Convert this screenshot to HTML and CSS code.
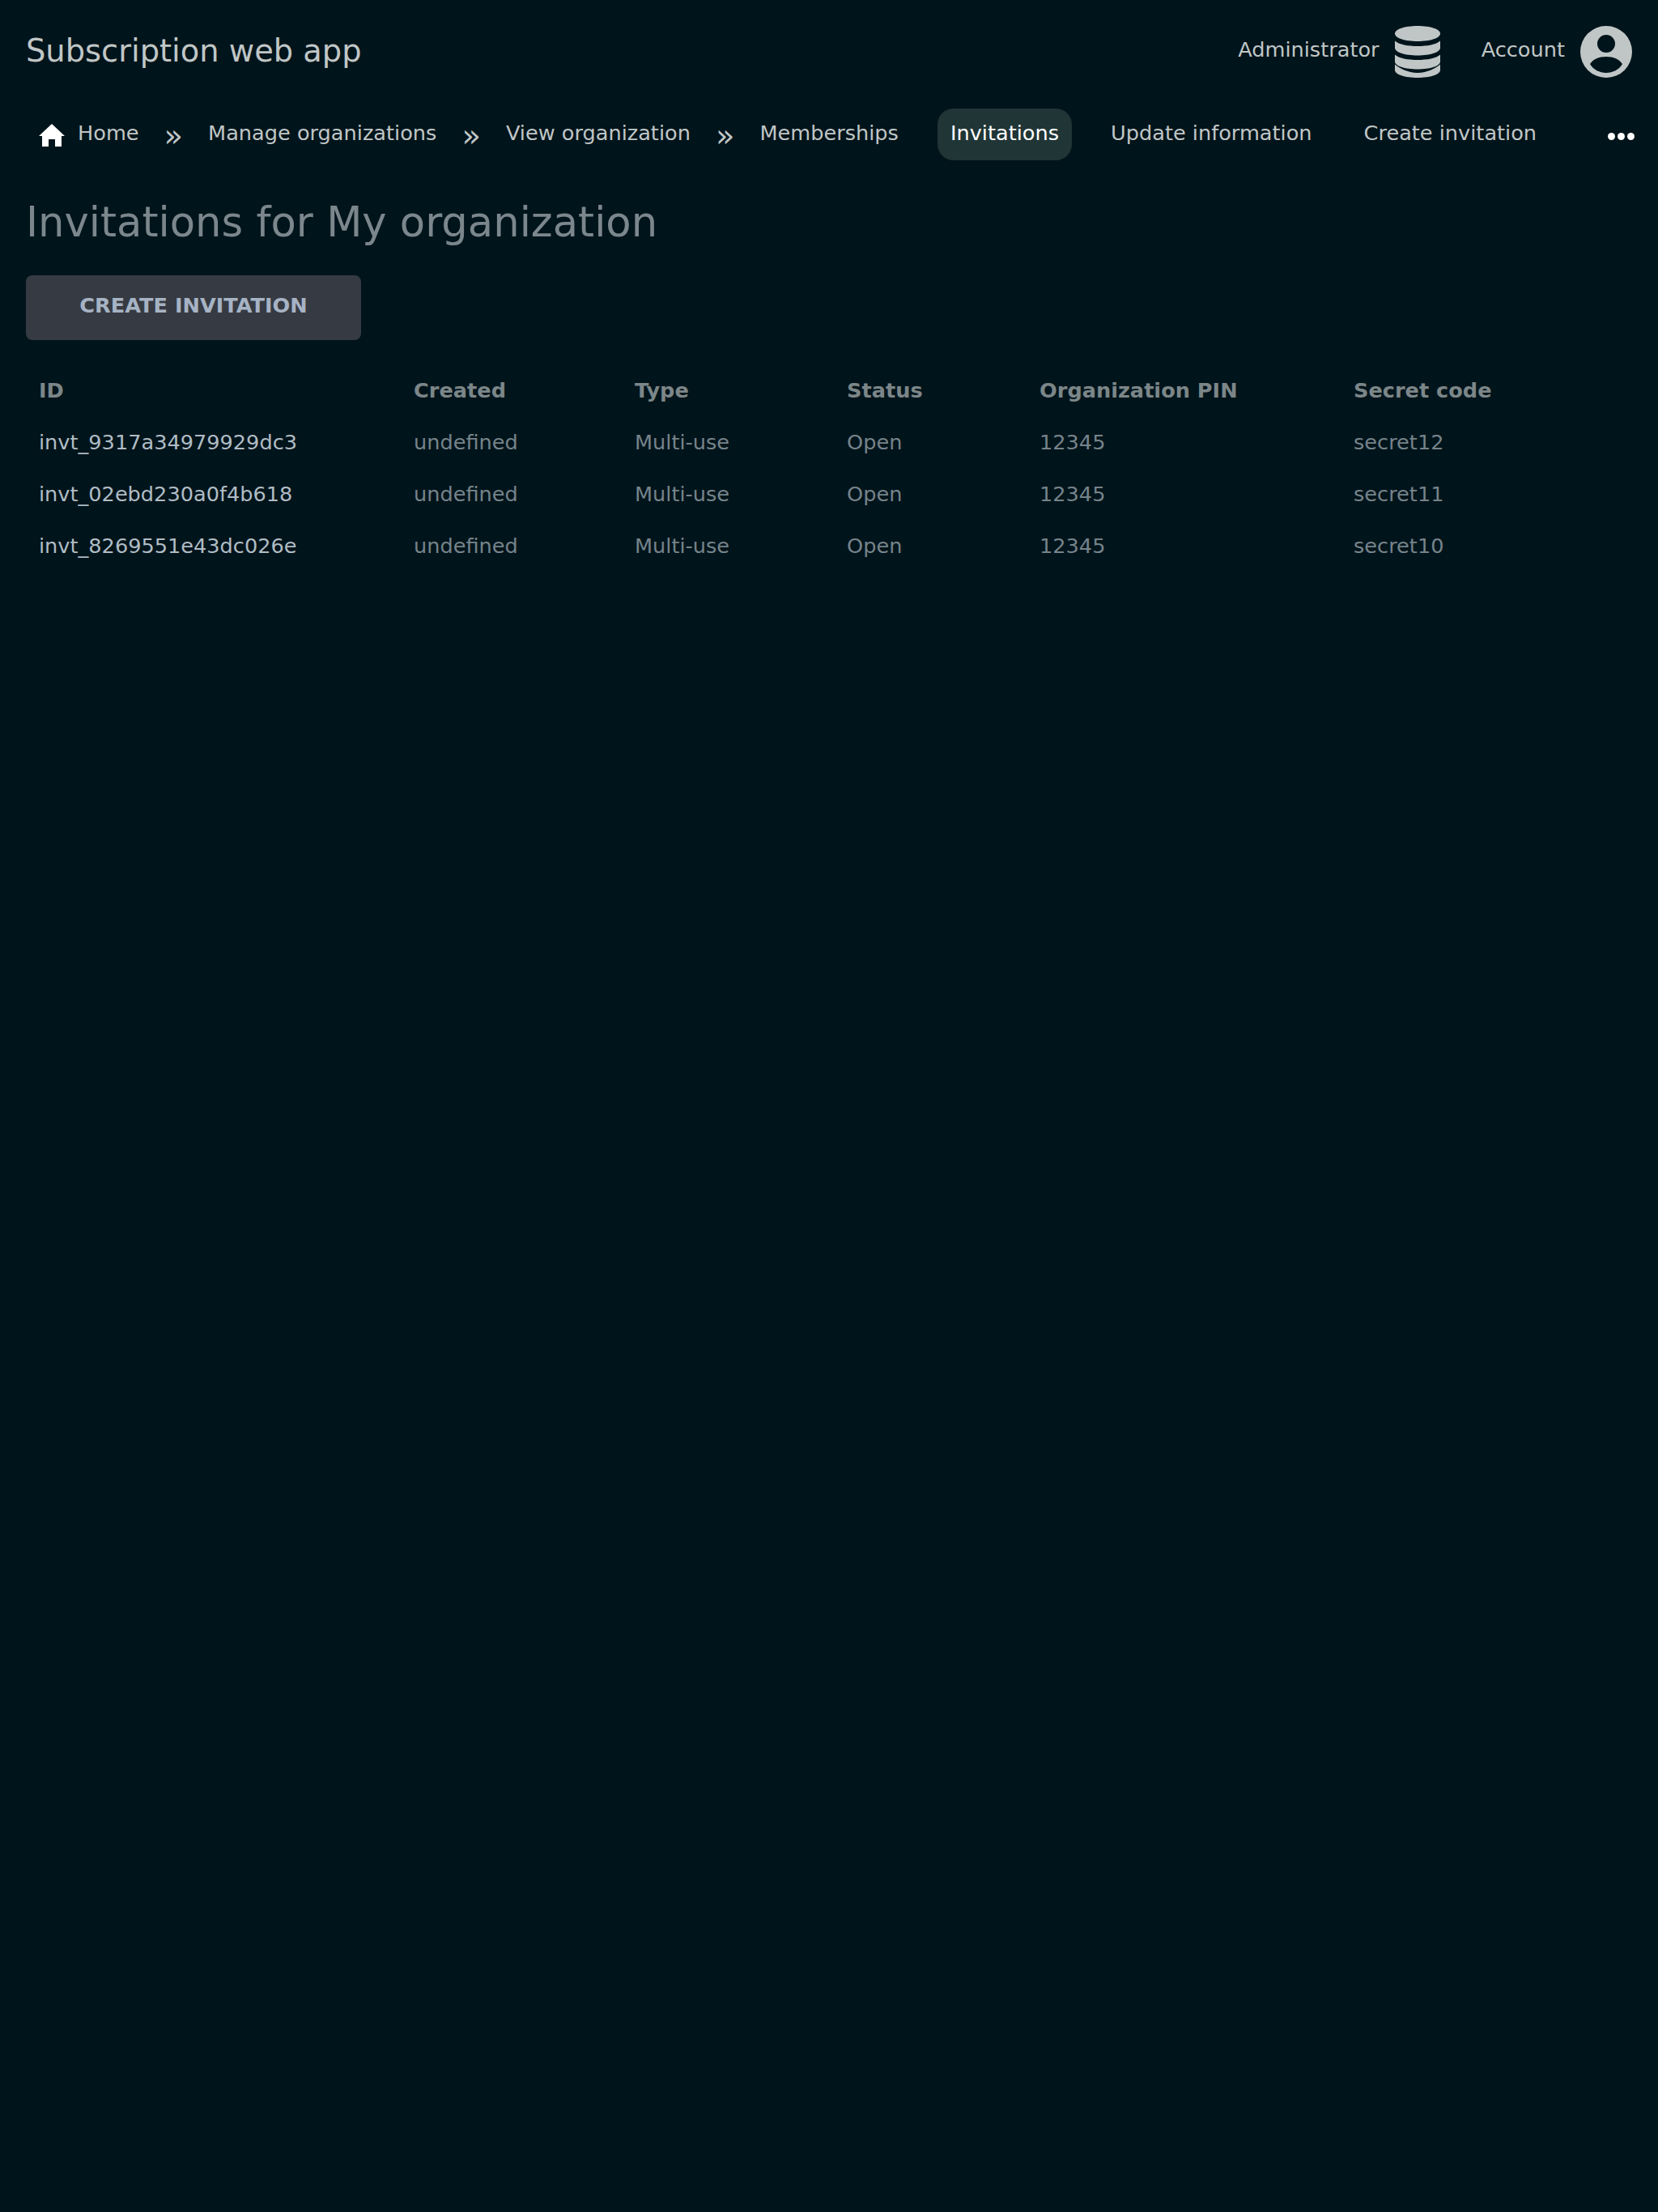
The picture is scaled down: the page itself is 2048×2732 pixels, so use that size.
FILE: index.html
```html
<!DOCTYPE html>
<html lang="en">

<head>
  <meta charset="UTF-8">
  <meta name="viewport" content="width=device-width, initial-scale=1.0">
  <title>Invitations</title>
  <link rel="stylesheet" href="styles.css">
</head>

<body>
  <header class="top-bar">
    <span class="app-title">Subscription web app</span>
    <div class="top-links">
      <a class="top-link">
        <span>Administrator</span>
        <svg class="db-icon" viewBox="0 0 56 64">
          <path d="M28 0C43.5 0 56 4 56 9.500S43.500 19 28 19 0 15 0 9.500 12.500 0 28 0z" />
          <path d="M0 18.500C5 23 16 25 28 25s23-2 28-6.500V27c0 5.500-12.500 9.500-28 9.500S0 32.500 0 27z" />
          <path d="M0 35.500C5 40 16 42 28 42s23-2 28-6.500V44c0 5.500-12.500 9.500-28 9.500S0 49.500 0 44z" />
          <path d="M0 47.500C5 52 16 58 28 58s23-6 28-10.500V54.500C56 60 43.500 64 28 64S0 60 0 54.500z" />
        </svg>
      </a>
      <a class="top-link">
        <span>Account</span>
        <svg class="user-icon" viewBox="0 0 64 64">
          <path fill-rule="evenodd" d="M32 0a32 32 0 1 1 0 64 32 32 0 0 1 0-64zm0 11a11 11 0 1 0 0 22 11 11 0 0 0 0-22zm0 27c-9 0-16 3-20 9 4 7 12 11 20 11s16-4 20-11c-4-6-11-9-20-9z" />
        </svg>
      </a>
    </div>
  </header>

  <nav class="menu">
    <a class="menu-item">
      <svg class="home-icon" viewBox="0 0 32 28">
        <path d="M16 0 32 15h-4v13h-8v-9h-8v9H4V15H0z" />
      </svg>
      Home
    </a>
    <span class="crumb-sep">»</span>
    <a class="menu-item">Manage organizations</a>
    <span class="crumb-sep">»</span>
    <a class="menu-item">View organization</a>
    <span class="crumb-sep">»</span>
    <a class="menu-item">Memberships</a>
    <a class="menu-item active">Invitations</a>
    <a class="menu-item">Update information</a>
    <a class="menu-item">Create invitation</a>
    <span class="more"><i></i><i></i><i></i></span>
  </nav>

  <main class="content">
    <h1>Invitations for My organization</h1>
    <button class="create-btn">CREATE INVITATION</button>

    <!-- Invitations list -->
    <table>
      <thead>
        <tr>
          <th class="col-id">ID</th>
          <th class="col-created">Created</th>
          <th class="col-type">Type</th>
          <th class="col-status">Status</th>
          <th class="col-pin">Organization PIN</th>
          <th>Secret code</th>
        </tr>
      </thead>
      <tbody>
        <tr>
          <td class="id-cell">invt_9317a34979929dc3</td>
          <td>undefined</td>
          <td>Multi-use</td>
          <td>Open</td>
          <td>12345</td>
          <td>secret12</td>
        </tr>
        <tr>
          <td class="id-cell">invt_02ebd230a0f4b618</td>
          <td>undefined</td>
          <td>Multi-use</td>
          <td>Open</td>
          <td>12345</td>
          <td>secret11</td>
        </tr>
        <tr>
          <td class="id-cell">invt_8269551e43dc026e</td>
          <td>undefined</td>
          <td>Multi-use</td>
          <td>Open</td>
          <td>12345</td>
          <td>secret10</td>
        </tr>
      </tbody>
    </table>
  </main>
</body>

</html>
```

FILE: styles.css
```css
body {
  margin: 0;
  min-height: 2732px;
  background-color: #00141b;
  color: #c0c6c6;
  font-family: "DejaVu Sans", sans-serif;
  font-size: 25.6px;
  line-height: 32px;
}

.top-bar {
  display: flex;
  justify-content: space-between;
  align-items: center;
  padding: 32px 32px 0;
  height: 64px;
}

.app-title {
  margin-top: -2px;
  font-size: 38.4px;
}

.top-links {
  display: flex;
  gap: 51px;
}

.top-link {
  display: flex;
  align-items: center;
  gap: 19px;
}

.top-link span {
  margin-top: -6px;
}

.db-icon {
  width: 56px;
  height: 64px;
  fill: #c0c6c6;
}

.user-icon {
  width: 64px;
  height: 64px;
  fill: #c0c6c6;
}

.menu {
  display: flex;
  align-items: center;
  height: 64px;
  margin-top: 38px;
  padding-left: 32px;
  padding-right: 29px;
}

.menu-item {
  display: flex;
  align-items: flex-start;
  padding: 14px 16px 18px;
  border-radius: 20px;
  white-space: nowrap;
}

.menu-item.active {
  margin-left: 32px;
  margin-right: 32px;
  background-color: #203536;
  color: #ffffff;
}

.menu-item.active + .menu-item {
  margin-right: 32px;
}

.home-icon {
  width: 32px;
  height: 28px;
  margin-top: 5px;
  margin-right: 16px;
  fill: #ffffff;
}

.crumb-sep {
  margin: 0 15px;
  padding-top: 4px;
  font-size: 38.4px;
}

.more {
  display: flex;
  gap: 3px;
  margin-left: auto;
  padding-top: 4px;
}

.more i {
  width: 9px;
  height: 9px;
  border-radius: 50%;
  background-color: #ffffff;
}

.content {
  padding: 0 32px;
}

h1 {
  margin: 46px 0 36px;
  color: #7b878c;
  font-size: 51.2px;
  font-weight: normal;
  line-height: 60px;
}

.create-btn {
  display: block;
  width: 414px;
  height: 80px;
  padding: 0 0 6px;
  border: none;
  border-radius: 8px;
  background-color: #363a42;
  color: #a6b3c4;
  font-family: inherit;
  font-size: 25.6px;
  font-weight: bold;
}

table {
  margin-top: 30px;
  border-collapse: collapse;
  table-layout: fixed;
  width: 1984px;
}

th,
td {
  height: 64px;
  padding: 0 16px;
  text-align: left;
  color: #76838a;
  white-space: nowrap;
}

th {
  color: #7c8688;
}

.col-id {
  width: 431px;
}

.col-created {
  width: 241px;
}

.col-type {
  width: 230px;
}

.col-status {
  width: 206px;
}

.col-pin {
  width: 356px;
}

td.id-cell {
  color: #b0bcc4;
}
```
